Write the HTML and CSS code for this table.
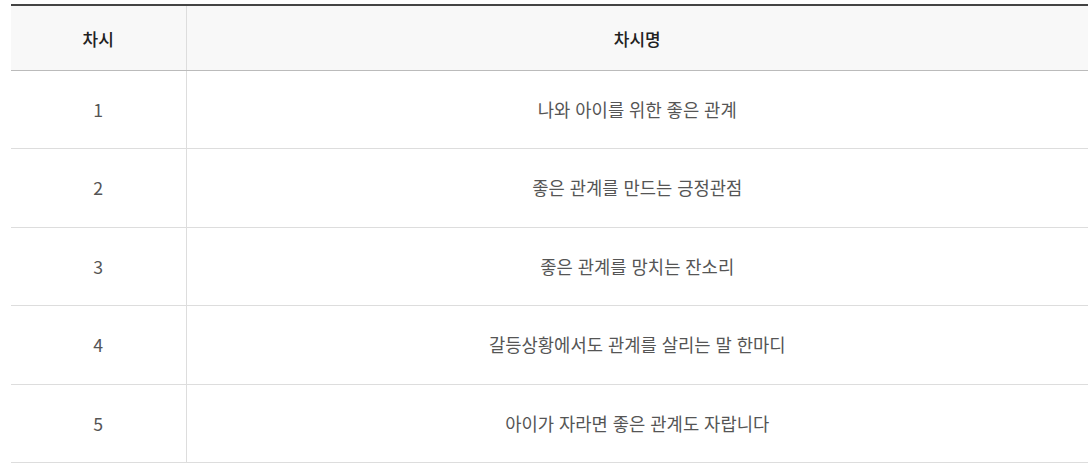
FILE: index.html
```html
<!DOCTYPE html>
<html lang="ko">
<head>
<meta charset="utf-8">
<link rel="stylesheet" href="styles.css">
</head>
<body>
<div class="wrap">
<table class="curri">
  <colgroup><col class="c-no"><col class="c-name"></colgroup>
  <thead>
    <tr><th>차시</th><th>차시명</th></tr>
  </thead>
  <tbody>
    <tr><td>1</td><td>나와 아이를 위한 좋은 관계</td></tr>
    <tr><td>2</td><td>좋은 관계를 만드는 긍정관점</td></tr>
    <tr><td>3</td><td>좋은 관계를 망치는 잔소리</td></tr>
    <tr><td>4</td><td>갈등상황에서도 관계를 살리는 말 한마디</td></tr>
    <tr><td>5</td><td>아이가 자라면 좋은 관계도 자랍니다</td></tr>
  </tbody>
</table>
</div>
</body>
</html>
```
FILE: styles.css
```css
html, body {
  margin: 0;
  padding: 0;
  background: #fff;
  overflow: hidden;
}
.wrap {
  padding: 4px 0 0 11px;
}
.curri {
  width: 100%;
  border-collapse: collapse;
  border-top: 2px solid #444;
  font-family: "Noto Sans CJK KR", "Noto Sans", sans-serif;
  font-size: 17.7px;
  table-layout: fixed;
}
.c-no { width: 175px; }
.curri th {
  height: 64px;
  padding: 0;
  background: #f8f8f8;
  color: #222;
  font-size: 17px;
  font-weight: 500;
  border-bottom: 1px solid #bbb;
  text-align: center;
  vertical-align: middle;
}
.curri td {
  height: 75px;
  padding: 0 0 2px;
  color: #555;
  font-weight: 400;
  border-bottom: 1px solid #ddd;
  text-align: center;
  vertical-align: middle;
}
.curri tbody tr:nth-child(even) td {
  height: 76px;
}
.curri th:first-child,
.curri td:first-child {
  border-right: 1px solid #ddd;
}
```
